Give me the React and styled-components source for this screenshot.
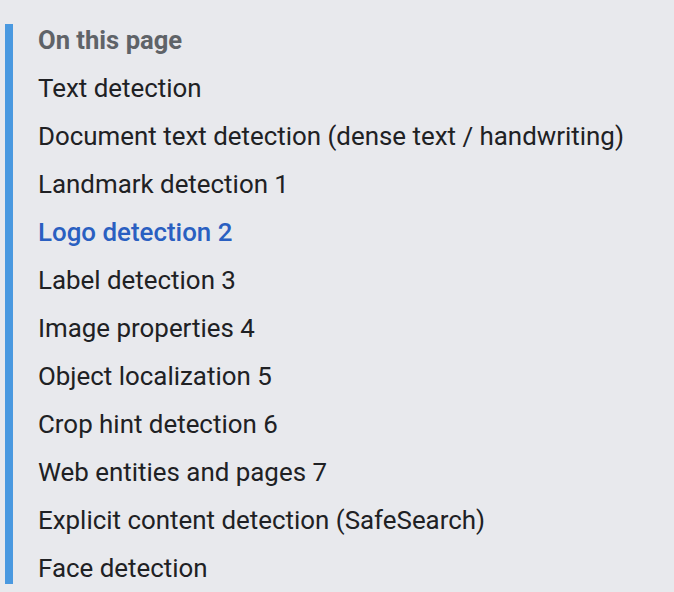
import React from "react";
import styled, { createGlobalStyle } from "styled-components";

const items = [
  { label: "Text detection" },
  { label: "Document text detection (dense text / handwriting)" },
  { label: "Landmark detection 1" },
  { label: "Logo detection 2", active: true },
  { label: "Label detection 3" },
  { label: "Image properties 4" },
  { label: "Object localization 5" },
  { label: "Crop hint detection 6" },
  { label: "Web entities and pages 7" },
  { label: "Explicit content detection (SafeSearch)" },
  { label: "Face detection" },
];

const GlobalStyle = createGlobalStyle`
  html, body {
    margin: 0;
    padding: 0;
    background: #e8e9ed;
  }
  body {
    font-family: Roboto, "Liberation Sans", Arial, sans-serif;
    -webkit-font-smoothing: antialiased;
  }
`;

const Page = styled.div`
  width: 674px;
  height: 592px;
  padding-top: 24px;
  box-sizing: border-box;
  background: #e8e9ed;
  overflow: hidden;
`;

const TocNav = styled.nav`
  margin-left: 5px;
  border-left: 8px solid #4a99e0;
  padding-left: 25px;
  display: flex;
  flex-direction: column;
  gap: 16px;
`;

const TocTitle = styled.div`
  font-size: 25.6px;
  line-height: 32px;
  font-weight: 700;
  color: #5f6368;
`;

const TocLink = styled.a`
  font-size: 25.9px;
  line-height: 32px;
  color: ${(p) => (p.$active ? "#2a5fc1" : "#202124")};
  font-weight: ${(p) => (p.$active ? 500 : 400)};
  text-decoration: none;
  white-space: nowrap;
`;

const App = () => {
  return (
    <Page>
      <GlobalStyle />
      <TocNav>
        <TocTitle>On this page</TocTitle>
        {items.map((item) => (
          <TocLink key={item.label} href="#" $active={item.active}>
            {item.label}
          </TocLink>
        ))}
      </TocNav>
    </Page>
  );
};

export default App;
